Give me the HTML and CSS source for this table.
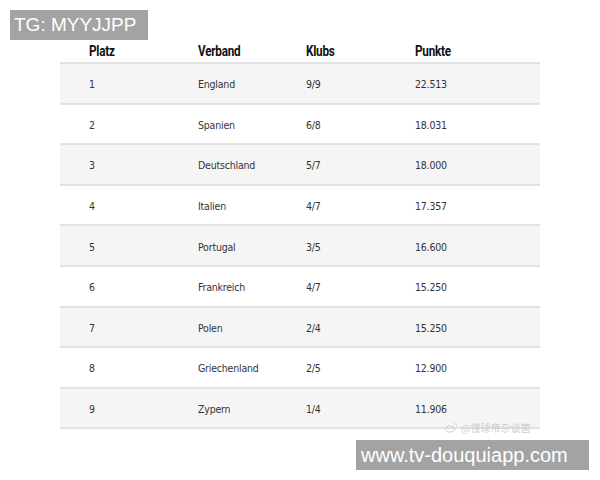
FILE: index.html
```html
<!DOCTYPE html>
<html>
<head>
<meta charset="utf-8">
<link rel="stylesheet" href="styles.css">
</head>
<body>
<div class="page">
  <div class="table">
    <div class="row head"><span>Platz</span><span>Verband</span><span>Klubs</span><span>Punkte</span></div>
    <div class="row odd"><span>1</span><span>England</span><span>9/9</span><span>22.513</span></div>
    <div class="row"><span>2</span><span>Spanien</span><span>6/8</span><span>18.031</span></div>
    <div class="row odd"><span>3</span><span>Deutschland</span><span>5/7</span><span>18.000</span></div>
    <div class="row"><span>4</span><span>Italien</span><span>4/7</span><span>17.357</span></div>
    <div class="row odd"><span>5</span><span>Portugal</span><span>3/5</span><span>16.600</span></div>
    <div class="row"><span>6</span><span>Frankreich</span><span>4/7</span><span>15.250</span></div>
    <div class="row odd"><span>7</span><span>Polen</span><span>2/4</span><span>15.250</span></div>
    <div class="row"><span>8</span><span>Griechenland</span><span>2/5</span><span>12.900</span></div>
    <div class="row odd"><span>9</span><span>Zypern</span><span>1/4</span><span>11.906</span></div>
  </div>
  <div class="mark">
    <svg width="14" height="11" viewBox="0 0 14 11"><path d="M5.5 3.2C3 4.3 1.2 6.2 1.8 8.2c.6 1.8 3.6 2.4 6.2 1.5 2.3-.8 3.4-2.4 2.7-3.6-.4-.7-1.3-.8-1.8-.6.5-1.5-.6-2.1-2.4-1.2" fill="none" stroke="#ccc" stroke-width="1"/><path d="M10.5 1.5c1.3.2 2.2 1.2 2 2.6" fill="none" stroke="#ccc" stroke-width="1"/></svg>
    <span>@懂球帝杂谈菌</span>
  </div>
  <div class="tag tag-top">TG: MYYJJPP</div>
  <div class="tag tag-bottom">www.tv-douquiapp.com</div>
</div>
</body>
</html>
```
FILE: styles.css
```css
html, body {
  margin: 0;
  padding: 0;
  background: #ffffff;
}
.page {
  position: relative;
  width: 600px;
  height: 480px;
  padding-top: 37px;
  box-sizing: border-box;
}
.table {
  margin-left: 60px;
  width: 480px;
}
.row {
  display: grid;
  grid-template-columns: 109px 108px 109px 1fr;
  padding-left: 29px;
  align-items: center;
  height: 40.6px;
  box-sizing: border-box;
  border-bottom: 2px solid #e2e2e2;
  font-family: "DejaVu Sans Condensed", "Roboto", sans-serif;
  font-size: 10.5px;
  color: #333;
  letter-spacing: -0.2px;
  padding-top: 2px;
}
.row.odd {
  background: #f5f5f5;
}
.row.head {
  height: 27px;
  font-family: "Roboto", sans-serif;
  font-weight: bold;
  font-size: 15px;
  color: #111;
  background: #fff;
  letter-spacing: -0.3px;
  padding-top: 3px;
  padding-bottom: 0;
}
.row.head span {
  display: inline-block;
  transform: scaleX(0.78);
  transform-origin: left center;
}
.tag {
  position: absolute;
  background: #a3a3a3;
  color: #ffffff;
  font-family: "Liberation Sans", Arial, sans-serif;
  height: 30px;
  line-height: 30px;
  box-sizing: border-box;
  white-space: nowrap;
}
.tag-top {
  left: 10px;
  top: 10px;
  width: 138px;
  font-size: 19px;
  padding-left: 4px;
}
.tag-bottom {
  left: 356px;
  top: 440px;
  width: 233px;
  font-size: 20px;
  padding-left: 5px;
}
.mark {
  position: absolute;
  left: 444px;
  top: 420px;
  display: flex;
  align-items: center;
  gap: 3px;
  color: #cfcfcf;
  font-family: "Noto Sans CJK SC", sans-serif;
  font-size: 10px;
}
```
